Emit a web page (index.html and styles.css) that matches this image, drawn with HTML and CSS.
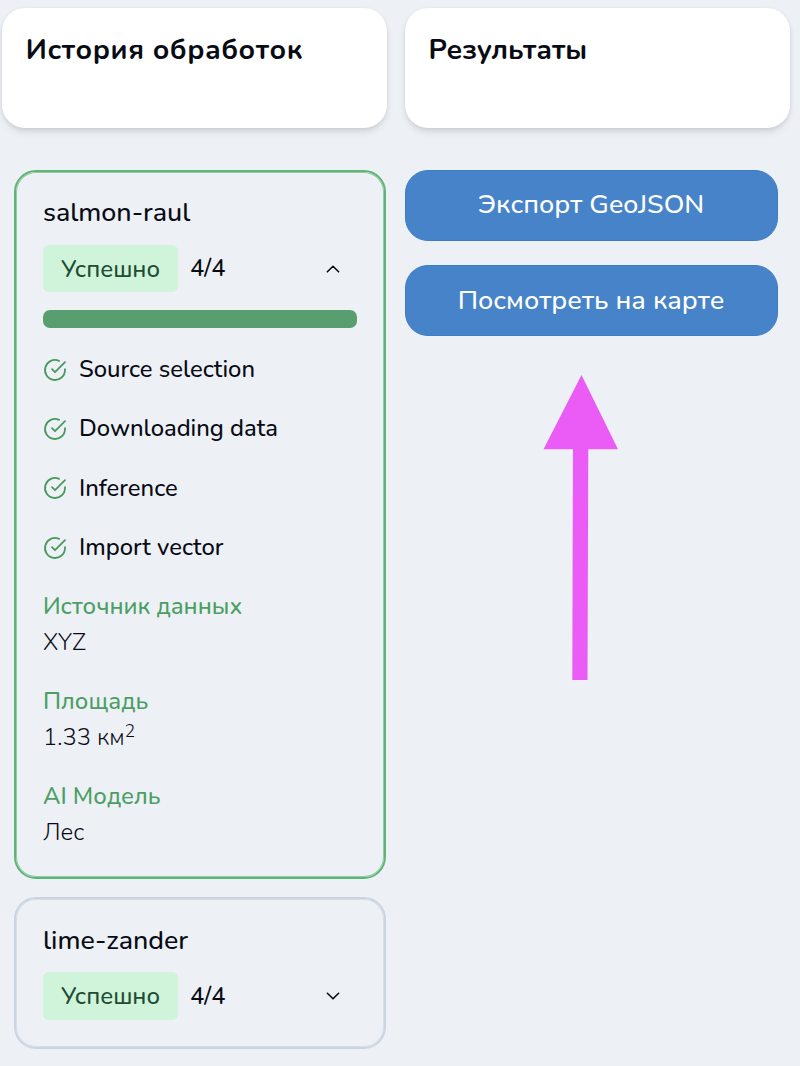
FILE: index.html
```html
<!DOCTYPE html>
<html lang="ru">
<head>
<meta charset="utf-8">
<title>История обработок</title>
<link rel="stylesheet" href="styles.css">
</head>
<body>
<svg class="defs" aria-hidden="true">
  <symbol id="check" viewBox="0 0 24 24"><path d="M22 11.1V12a10 10 0 1 1-5.93-9.14M22 4.2 12 14.2l-3-3"/></symbol>
</svg>
<main class="layout">
  <section class="column">
    <header class="panel"><h2 class="panel-title">История обработок</h2></header>
    <div class="cards">
      <article class="card card-active">
        <h3 class="card-title">salmon-raul</h3>
        <div class="status">
          <span class="badge">Успешно</span>
          <span class="count">4/4</span>
          <svg class="chevron" viewBox="0 0 16 16"><path d="M2.4 10.8 8 5.3l5.6 5.5"/></svg>
        </div>
        <div class="progress"></div>
        <ul class="steps">
          <li class="step"><svg class="check"><use href="#check"/></svg><span>Source selection</span></li>
          <li class="step"><svg class="check"><use href="#check"/></svg><span>Downloading data</span></li>
          <li class="step"><svg class="check"><use href="#check"/></svg><span>Inference</span></li>
          <li class="step"><svg class="check"><use href="#check"/></svg><span>Import vector</span></li>
        </ul>
        <dl class="details">
          <div><dt>Источник данных</dt><dd>XYZ</dd></div>
          <div><dt>Площадь</dt><dd>1.33 км<sup>2</sup></dd></div>
          <div><dt>AI Модель</dt><dd>Лес</dd></div>
        </dl>
      </article>
      <article class="card card-closed">
        <h3 class="card-title">lime-zander</h3>
        <div class="status">
          <span class="badge">Успешно</span>
          <span class="count">4/4</span>
          <svg class="chevron" viewBox="0 0 16 16"><path d="M2.4 5.3 8 10.8l5.6-5.5"/></svg>
        </div>
      </article>
    </div>
  </section>
  <section class="column">
    <header class="panel"><h2 class="panel-title panel-title-results">Результаты</h2></header>
    <div class="actions">
      <button class="action">Экспорт GeoJSON</button>
      <button class="action">Посмотреть на карте</button>
      <svg class="arrow" viewBox="0 0 76 308"><path d="M38.5 1 75 75.3H45.3L44.5 306H29.3L29.9 75.3H.5Z"/></svg>
    </div>
  </section>
</main>
</body>
</html>
```
FILE: styles.css
```css
* { box-sizing: border-box; }
body {
  margin: 0;
  height: 1066px;
  overflow: hidden;
  background: #edf1f6;
  color: #090b14;
  font: 500 23.8px/35.6px Nunito, "Open Sans", "Noto Sans", sans-serif;
}
h2, h3, ul, dl, dd { margin: 0; padding: 0; }
.defs { display: none; }
.layout {
  display: grid;
  grid-template-columns: 385px 385.5px;
  column-gap: 17.8px;
  padding: 8px 0 0 1.8px;
}
.panel {
  height: 120px;
  padding: 24px 24px;
  background: #fff;
  border-radius: 23px;
  box-shadow: 0 5px 9px -2px rgba(0, 0, 0, .12), 0 1px 4px rgba(0, 0, 0, .08);
}
.panel-title { font-size: 28.2px; line-height: 36px; font-weight: 700; letter-spacing: .57px; white-space: nowrap; }
.panel-title-results { letter-spacing: 0; }
.cards {
  display: flex;
  flex-direction: column;
  gap: 18px;
  padding: 42px 0 0 12.2px;
}
.card {
  width: 372px;
  padding: 21.5px 27px 0 27px;
  border: 2px solid #ccd5df;
  border-radius: 22px;
  box-shadow: inset 0 0 0 1px #d5dde6;
  white-space: nowrap;
}
.card-active { padding-top: 21px; height: 709px; border-color: #5fb578; box-shadow: inset 0 0 0 1px #93cba5; }
.card-closed { height: 151.5px; }
.card-title { font-size: 26.8px; line-height: 38px; font-weight: 500; }
.status { display: flex; align-items: center; margin-top: 13.5px; height: 47.5px; }
.badge {
  width: 135px;
  height: 47.5px;
  line-height: 48px;
  text-align: center;
  background: #d0f4d9;
  color: #204b34;
  border-radius: 6px;
}
.count { margin-left: 12px; line-height: 48px; }
.chevron { width: 16px; height: 16px; margin: 1px 15.5px 0 auto; fill: none; stroke: #090b14; stroke-width: 1.6; stroke-linecap: round; stroke-linejoin: round; }
.progress { height: 18px; margin-top: 18px; border-radius: 7px; background: #589e6f; }
.steps { list-style: none; margin-top: 23.8px; display: flex; flex-direction: column; gap: 23.8px; }
.step { display: flex; align-items: center; gap: 12px; }
.check { width: 24px; height: 24px; fill: none; stroke: #489a5c; stroke-width: 1.8; stroke-linecap: round; stroke-linejoin: round; }
.details { display: flex; flex-direction: column; gap: 23.7px; margin-top: 23.7px; }
.details dt { color: #4c9e64; }
.details dd { font-weight: 300; }
sup { font-size: 17.8px; line-height: 0; vertical-align: 8px; }
.actions { display: flex; flex-direction: column; gap: 24.4px; padding-top: 41.5px; width: 373px; }
.action {
  height: 71px;
  padding: 0;
  border: 1px solid #3d7cc7;
  border-radius: 23px;
  background: #4783c9;
  color: #fff;
  font: inherit;
  font-size: 26.8px;
  white-space: nowrap;
}
.arrow { width: 76px; height: 308px; margin: 13.5px 0 0 138.6px; fill: #eb5cf7; }
```
